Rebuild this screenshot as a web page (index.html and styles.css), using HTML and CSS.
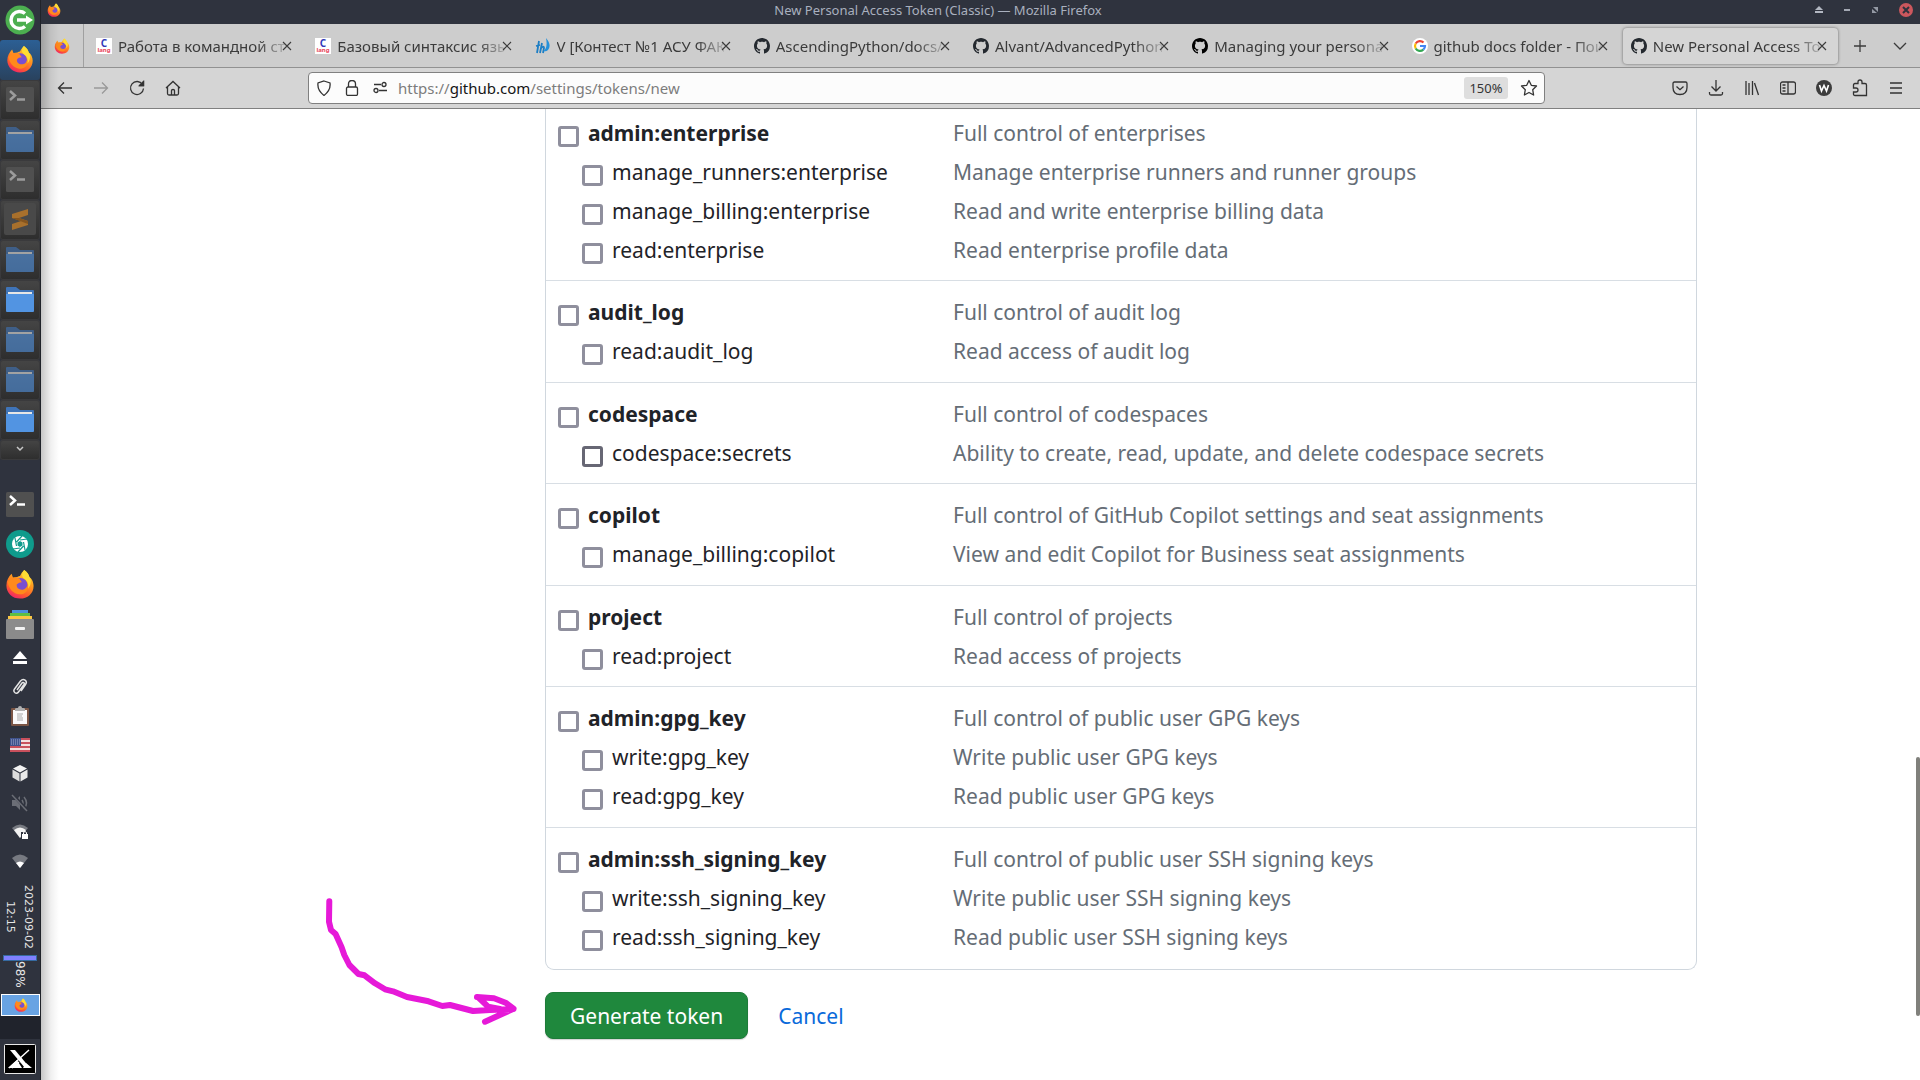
FILE: index.html
```html
<!DOCTYPE html>
<html lang="en">
<head>
<meta charset="utf-8">
<title>New Personal Access Token (Classic)</title>
<link rel="stylesheet" href="styles.css">
</head>
<body>
<svg class="sprite" aria-hidden="true">
  <defs>
    <linearGradient id="ff-body" x1="0.8" y1="0" x2="0.3" y2="1">
      <stop offset="0" stop-color="#ffe03a"/><stop offset="0.4" stop-color="#ff9a1f"/><stop offset="0.75" stop-color="#ff5a2c"/><stop offset="1" stop-color="#f0246a"/>
    </linearGradient>
    <symbol id="firefox" viewBox="0 0 32 32">
      <path fill="url(#ff-body)" d="M20.500 1C24 3.500 25.500 6 26 8.500C28.500 10 30.500 14 30.500 18C30.500 26 24 31.500 16 31.500S1.500 25.500 1.500 17.500C1.500 12 4 8 7 5L8.500 9L13 8.500C14 8 15 7.500 16 7.500C17 5 18.500 3 20.500 1Z"/>
      <circle cx="16.500" cy="17" r="7.500" fill="#7a4fd0"/>
      <path fill="#ff8a1c" d="M3 14C6 9 11 8 15.500 10.500L18 14C15 14 14 15 12.500 16.500C12 20 15 22.500 19 22C22 21.500 23.500 19 24 17C26 23 21 27.500 15.500 27C9 26.500 4 21 3 14Z"/>
      <path fill="#ffdc35" d="M20.500 1C17.500 5 17.500 8 20.500 10.500C24.500 13.500 25.500 17 24.500 21C28 17.500 28.500 11 26 8.500C25.500 6 24 3.500 20.500 1Z"/>
    </symbol>
    <symbol id="folder" viewBox="0 0 28 26">
      <path class="folder-back" d="M0 2Q0 1 1 1H10L14 4H27Q28 4 28 5V24H0Z"/>
      <path class="folder-paper" d="M2 6H26V10H2Z"/>
      <path class="folder-front" d="M0 8H28V25Q28 26 27 26H1Q0 26 0 25Z"/>
    </symbol>
    <symbol id="terminal" viewBox="0 0 28 25">
      <rect width="28" height="25" rx="1.500" fill="#505050"/>
      <path d="M4 4L9 8.500L4 13" fill="none" stroke="currentColor" stroke-width="2.500"/>
      <path d="M11 12.500H19" stroke="currentColor" stroke-width="2.500"/>
    </symbol>
    <symbol id="github" viewBox="0 0 16 16">
      <path fill="currentColor" d="M8 0C3.580 0 0 3.580 0 8c0 3.540 2.290 6.530 5.470 7.590.4.070.55-.17.55-.38 0-.19-.01-.82-.01-1.490-2.010.37-2.530-.49-2.690-.94-.09-.23-.48-.94-.82-1.130-.28-.15-.68-.52-.01-.53.63-.01 1.080.58 1.230.82.72 1.210 1.870.87 2.330.66.07-.52.28-.87.51-1.070-1.780-.2-3.640-.89-3.640-3.950 0-.87.31-1.590.82-2.150-.08-.2-.36-1.020.08-2.120 0 0 .67-.21 2.200.82.64-.18 1.320-.27 2-.27.68 0 1.360.09 2 .27 1.530-1.040 2.200-.82 2.200-.82.44 1.100.16 1.920.08 2.120.51.56.82 1.270.82 2.150 0 3.070-1.870 3.750-3.650 3.950.29.25.54.73.54 1.480 0 1.070-.01 1.930-.01 2.200 0 .21.15.46.55.38A8.010 8.010 0 0 0 16 8c0-4.420-3.580-8-8-8z"/>
    </symbol>
    <symbol id="clang" viewBox="0 0 16 16">
      <rect width="16" height="16" fill="#fff"/>
      <text x="8" y="9" text-anchor="middle" class="clang-c">C</text>
      <text x="8" y="14" text-anchor="middle" class="clang-lang">lang</text>
    </symbol>
    <symbol id="close" viewBox="0 0 10 10"><path d="M1 1L9 9M9 1L1 9" stroke="currentColor" stroke-width="1.100"/></symbol>
  </defs>
</svg>

<aside class="dock" aria-label="Panel">
  <button class="dock-tile" aria-label="Log out"><svg width="30" height="30" viewBox="0 0 30 30"><circle cx="15" cy="15" r="14.500" fill="#4caf50"/><path d="M20 8.500A8.500 8.500 0 1 0 20 21.500" fill="none" stroke="#fff" stroke-width="3.500"/><path d="M12 15H22" stroke="#fff" stroke-width="3.500"/><path d="M21 10.500L28 15L21 19.500Z" fill="#fff"/></svg></button>
  <button class="dock-tile task focused" aria-label="Firefox"><svg width="28" height="28"><use href="#firefox"/></svg></button>
  <button class="dock-tile task minimized" aria-label="Terminal"><svg width="28" height="25"><use href="#terminal"/></svg></button>
  <button class="dock-tile task dim" aria-label="Files"><svg width="28" height="26"><use href="#folder"/></svg></button>
  <button class="dock-tile task minimized" aria-label="Terminal"><svg width="28" height="25"><use href="#terminal"/></svg></button>
  <button class="dock-tile task" aria-label="Sublime Text"><svg width="32" height="32" viewBox="0 0 32 32"><rect width="32" height="32" rx="2" fill="#494949"/><path d="M8 11L24 6V12L15 15L24 18V22L8 27V21L17 18L8 15Z" fill="#a8702c"/><path d="M8 15L15 15L24 18V21Z" fill="#85551f"/></svg></button>
  <button class="dock-tile task dim" aria-label="Files"><svg width="28" height="26"><use href="#folder"/></svg></button>
  <button class="dock-tile task" aria-label="Files"><svg width="28" height="26"><use href="#folder"/></svg></button>
  <button class="dock-tile task dim" aria-label="Files"><svg width="28" height="26"><use href="#folder"/></svg></button>
  <button class="dock-tile task dim" aria-label="Files"><svg width="28" height="26"><use href="#folder"/></svg></button>
  <button class="dock-tile task" aria-label="Files"><svg width="28" height="26"><use href="#folder"/></svg></button>
  <button class="dock-tile task more" aria-label="More windows"><svg width="8" height="6" viewBox="0 0 8 6"><path d="M1 1L4 4L7 1" fill="none" stroke="#c8c8c8" stroke-width="1.500"/></svg></button>

  <div class="launchers">
    <button class="dock-tile" aria-label="Terminal"><svg class="bright" width="28" height="25"><use href="#terminal"/></svg></button>
    <button class="dock-tile" aria-label="Screenshot"><svg width="28" height="28" viewBox="0 0 28 28"><circle cx="14" cy="14" r="14" fill="#0f9b8c"/><circle cx="14" cy="14" r="8" fill="#fff"/><path d="M14 10L21 9M17.500 12L19 20M17.500 16L12 22M14 18L7 19M10.500 16L9 8M10.500 12L16 6" stroke="#0f9b8c" stroke-width="1.200"/><path d="M14 11L16.500 12.500V15.500L14 17L11.500 15.500V12.500Z" fill="#0f9b8c"/></svg></button>
    <button class="dock-tile" aria-label="Firefox"><svg width="30" height="30"><use href="#firefox"/></svg></button>
    <button class="dock-tile" aria-label="File manager"><svg width="28" height="29" viewBox="0 0 28 29"><rect x="6" width="16" height="4" fill="#4a8fdc"/><rect x="4" y="3" width="20" height="4" fill="#5fbf42"/><rect x="2" y="6" width="24" height="4" fill="#fbc743"/><rect y="9" width="28" height="20" rx="1" fill="#8b8b8b"/><rect x="9" y="17" width="10" height="3" rx="1" fill="#f2f2f2"/></svg></button>
  </div>

  <div class="tray">
    <button aria-label="Eject"><svg width="16" height="16" viewBox="0 0 16 16" fill="#fff"><path d="M8 1L15 9H1Z"/><path d="M1 11H15V14H1Z"/></svg></button>
    <button aria-label="Attachments"><svg width="16" height="18" viewBox="0 0 16 18" fill="none" stroke="#e4e4e4" stroke-width="1.500"><path d="M5 12L10 5C11 3.500 13 5 12 6.500L6.500 14C4.500 17 0.500 14 2.500 11L8.500 3C11.500-.5 16 3 13.500 6.500L9 13"/></svg></button>
    <button aria-label="Clipboard"><svg width="18" height="20" viewBox="0 0 18 20"><rect y="2" width="18" height="18" rx="1" fill="#7b5544"/><path d="M2 4H16V18H2Z" fill="#fafafa"/><path d="M4 5V3Q4 2 6 2H7Q7 0 9 0T11 2H12Q14 2 14 3V5Z" fill="#b0b0b0"/><path d="M6 8H12M6 10H11M6 12H12M6 14H12" stroke="#aaa"/></svg></button>
    <button aria-label="Keyboard layout"><svg width="20" height="14" viewBox="0 0 20 14"><path d="M0 0H20V14H0Z" fill="#f3dede"/><path d="M0 1H20M0 5H20M0 9H20M0 13H20" stroke="#c9505c" stroke-width="2"/><path d="M0 0H11V8H0Z" fill="#40538c"/><path d="M1 2H10M1 4H10M1 6H10" stroke="#a2acd0" stroke-dasharray="1 1"/></svg></button>
    <button aria-label="Packages"><svg width="16" height="18" viewBox="0 0 16 18"><path d="M8 0L15 3.500L8 7.500L1 3.500Z" fill="#f2f2f2"/><path d="M.5 4.500L7.500 8.500V16.500L.5 12.500Z" fill="#dcdcdc"/><path d="M15.500 4.500L8.500 8.500V16.500L15.500 12.500Z" fill="#e9e9e9"/></svg></button>
    <button aria-label="Muted"><svg width="18" height="18" viewBox="0 0 18 18"><path d="M1 6H5L9 2V16L5 12H1Z" fill="#6b6e76"/><path d="M11 6Q13 9 11 12M13 3Q18 9 13 15" fill="none" stroke="#6b6e76" stroke-width="1.500"/><path d="M2 1L17 17" stroke="#2f333e" stroke-width="3"/><path d="M1 1L16 17" stroke="#6b6e76" stroke-width="1.500"/></svg></button>
    <button aria-label="Wi-Fi"><svg width="17" height="18" viewBox="0 0 17 18"><path d="M0 5Q8 -2 16 5L8 15Z" fill="#777a81"/><path d="M2 7Q8 2 14 7L8 15Z" fill="#f2f2f2"/><path d="M9 9H17V17H9Z" fill="#2f333e"/><path d="M10 11H16V16H10Z" fill="#fff"/><path d="M11.500 11V9.500Q13 7.500 14.500 9.500V11" fill="none" stroke="#fff"/></svg></button>
    <button aria-label="Network"><svg width="16" height="16" viewBox="0 0 16 16"><path d="M0 5Q8 -2 16 5L8 15Z" fill="#777a81"/><path d="M4 10Q8 7 12 10L8 15Z" fill="#fff"/></svg></button>
  </div>

  <div class="clock"><time>2023-09-02</time><time>12:15</time></div>
  <div class="battery"><span class="battery-bar"></span><span class="battery-text">98%</span></div>
  <button class="pager" aria-label="Workspace"><svg width="14" height="14"><use href="#firefox"/></svg></button>
  <div class="dock-gap"></div>
  <button class="dock-tile" aria-label="X server"><svg width="32" height="30" viewBox="0 0 32 30"><rect x=".5" y=".5" width="31" height="29" rx="1" fill="#000" stroke="#e8e8e8"/><path d="M6 6H11L26 24H21Z" fill="#fff"/><path d="M25 6L5 24M8 24L15 18" stroke="#fff" stroke-width="1.500"/><path d="M4 24L13 16L18 24ZM19 24L22 19L28 24Z" fill="#fff"/></svg></button>
</aside>

<div class="window">
  <header class="titlebar">
    <svg width="14" height="14"><use href="#firefox"/></svg>
    <span class="titlebar-text">New Personal Access Token (Classic) — Mozilla Firefox</span>
    <div class="window-buttons">
      <button aria-label="Roll up"><svg width="8" height="8" viewBox="0 0 8 8" fill="#b3b8c2"><path d="M4 0L8 4H0Z"/><path d="M0 5H8V7H0Z"/></svg></button>
      <button aria-label="Minimize"><svg width="8" height="8" viewBox="0 0 8 8"><path d="M1 3H7V5H1Z" fill="#a4a9b4"/></svg></button>
      <button aria-label="Restore"><svg width="8" height="8" viewBox="0 0 8 8" fill="#9499a4"><path d="M2 1H7V6Z"/><path d="M1 3L6 7H1Z"/></svg></button>
      <button aria-label="Close"><svg width="14" height="14" viewBox="0 0 14 14"><circle cx="7" cy="7" r="7" fill="#cc575d"/><path d="M4 4L10 10M10 4L4 10" stroke="#2f333e" stroke-width="2"/></svg></button>
    </div>
  </header>

  <nav class="tabbar">
    <a class="pinned" href="#" aria-label="Firefox View"><svg width="16" height="16"><use href="#firefox"/></svg></a>
    <div class="tabs">
      <div class="tab"><svg width="16" height="16"><use href="#clang"/></svg><a href="#">Работа в командной стр</a><button aria-label="Close tab"><svg width="10" height="10"><use href="#close"/></svg></button></div>
      <div class="tab"><svg width="16" height="16"><use href="#clang"/></svg><a href="#">Базовый синтаксис язы</a><button aria-label="Close tab"><svg width="10" height="10"><use href="#close"/></svg></button></div>
      <div class="tab"><svg width="16" height="16" viewBox="0 0 16 16"><path d="M4 3L2 15M1 8L5 7M7 5L5 15M5.500 11Q9 7 9 10L8 15" fill="none" stroke="#1d7ec4" stroke-width="1.800"/><path d="M11 0Q17 7 13 12Q11 14 8.500 13Q13 10 11 0Z" fill="#2491db"/></svg><a href="#">V [Контест №1 АСУ ФАКИ</a><button aria-label="Close tab"><svg width="10" height="10"><use href="#close"/></svg></button></div>
      <div class="tab"><svg class="gh" width="16" height="16"><use href="#github"/></svg><a href="#">AscendingPython/docs/g</a><button aria-label="Close tab"><svg width="10" height="10"><use href="#close"/></svg></button></div>
      <div class="tab"><svg class="gh" width="16" height="16"><use href="#github"/></svg><a href="#">Alvant/AdvancedPython:</a><button aria-label="Close tab"><svg width="10" height="10"><use href="#close"/></svg></button></div>
      <div class="tab"><svg class="gh-black" width="16" height="16"><use href="#github"/></svg><a href="#">Managing your personal</a><button aria-label="Close tab"><svg width="10" height="10"><use href="#close"/></svg></button></div>
      <div class="tab"><svg width="16" height="16" viewBox="0 0 16 16"><circle cx="8" cy="8" r="8" fill="#fff"/><g fill="none" stroke-width="2.200"><path d="M11.500 4.500A5 5 0 0 0 3.700 5.500" stroke="#ea4335"/><path d="M3.700 5.500A5 5 0 0 0 3.700 10.500" stroke="#fbbc05"/><path d="M3.700 10.500A5 5 0 0 0 11.300 11.700" stroke="#34a853"/><path d="M11.300 11.700A5 5 0 0 0 13 8H8" stroke="#4285f4"/></g></svg><a href="#">github docs folder - Пои</a><button aria-label="Close tab"><svg width="10" height="10"><use href="#close"/></svg></button></div>
      <div class="tab active"><svg class="gh" width="16" height="16"><use href="#github"/></svg><a href="#">New Personal Access Tok</a><button aria-label="Close tab"><svg width="10" height="10"><use href="#close"/></svg></button></div>
    </div>
    <button class="tabbar-button" aria-label="New tab"><svg width="12" height="12" viewBox="0 0 12 12"><path d="M6 0V12M0 6H12" stroke="currentColor" stroke-width="1.300"/></svg></button>
    <button class="tabbar-button" aria-label="List all tabs"><svg width="14" height="8" viewBox="0 0 14 8"><path d="M1 1L7 7L13 1" fill="none" stroke="currentColor" stroke-width="1.300"/></svg></button>
  </nav>

  <div class="toolbar">
    <div class="nav-buttons">
      <button aria-label="Back"><svg width="16" height="16" viewBox="0 0 16 16"><path d="M15 8H1.500M7 2.500L1.500 8L7 13.500"/></svg></button>
      <button aria-label="Forward" disabled><svg width="16" height="16" viewBox="0 0 16 16"><path d="M1 8H14.500M9 2.500L14.500 8L9 13.500"/></svg></button>
      <button aria-label="Reload"><svg width="16" height="16" viewBox="0 0 16 16"><path d="M13.500 4.500A6.500 6.500 0 1 0 14.500 8.500M14.500 1V5.500H10"/><path d="M14.500 1.500V5.500H10.500Z" fill="currentColor"/></svg></button>
      <button aria-label="Home"><svg width="16" height="16" viewBox="0 0 16 16"><path d="M1 8L8 1.500L15 8M2.500 7V13.500Q2.500 15 4 15H12Q13.500 15 13.500 13.500V7M6.500 15V10.500Q6.500 9.500 8 9.500T9.500 10.500V15"/></svg></button>
    </div>
    <div class="urlbar">
      <svg width="16" height="16" viewBox="0 0 16 16"><path d="M8 1L14 3Q15 10 8 15.500Q1 10 2 3Z"/></svg>
      <svg width="16" height="16" viewBox="0 0 16 16"><rect x="2.500" y="7" width="11" height="8.500" rx="1.500"/><path d="M4.500 7V4Q4.500 .5 8 .5T11.500 4V7"/></svg>
      <svg width="16" height="16" viewBox="0 0 16 16"><path d="M2 4.500H9M7 10.500H15"/><circle cx="12" cy="4.500" r="2"/><circle cx="4" cy="10.500" r="2"/></svg>
      <span class="url" role="textbox" aria-label="Address">https://<b>github.com</b>/settings/tokens/new</span>
      <button class="zoom-level">150%</button>
      <button aria-label="Bookmark"><svg width="18" height="18" viewBox="0 0 18 18"><path d="M9 1.500L11.300 6.300L16.500 7L12.700 10.700L13.600 16L9 13.500L4.400 16L5.300 10.700L1.500 7L6.700 6.300Z" stroke-linejoin="round"/></svg></button>
    </div>
    <div class="tool-buttons">
      <button aria-label="Save to Pocket"><svg width="16" height="16" viewBox="0 0 16 16"><path d="M2.500 2H13.500Q15 2 15 3.500V7.500Q15 14.500 8 14.500T1 7.500V3.500Q1 2 2.500 2ZM4.500 6.500L8 9.700L11.500 6.500"/></svg></button>
      <button aria-label="Downloads"><svg width="16" height="16" viewBox="0 0 16 16"><path d="M8 0V11M3.500 6.500L8 11L12.500 6.500M1.500 12V13.500Q1.500 15 3 15H13Q14.500 15 14.500 13.500V12"/></svg></button>
      <button aria-label="Library"><svg width="16" height="16" viewBox="0 0 16 16"><path d="M2 1V15M5 3V15M8.500 1V15M10.500 3L14.500 15"/></svg></button>
      <button aria-label="Sidebars"><svg width="16" height="16" viewBox="0 0 16 16"><rect x=".5" y="2" width="15" height="12" rx="2"/><path d="M8 2V14M2.500 5H5.500M2.500 8H5.500M2.500 11H5.500"/></svg></button>
      <button aria-label="Account"><svg width="16" height="16" viewBox="0 0 16 16"><circle cx="8" cy="8" r="8" fill="#3d3d3d" stroke="none"/><path d="M3.500 5L5.500 11L8 5.500L10.500 11L12.500 5" stroke="#fff" stroke-width="1.600"/></svg></button>
      <button aria-label="Extensions"><svg width="16" height="18" viewBox="0 0 16 18"><path d="M1.500 9V6Q1.500 4.500 3 4.500H6V3Q6 1 8 1T10 3V4.500H13Q14.500 4.500 14.500 6V16.500H3Q1.500 16.500 1.500 15V13H4Q6 13 6 11T4 9Z"/></svg></button>
      <button aria-label="Menu"><svg width="14" height="14" viewBox="0 0 14 14"><path d="M1 2H13M1 7H13M1 12H13"/></svg></button>
    </div>
  </div>

  <main class="page">
    <form class="token-form">
      <ul class="scopes">
        <li class="group">
          <div class="row parent"><label><input type="checkbox">admin:enterprise</label><span>Full control of enterprises</span></div>
          <div class="row"><label><input type="checkbox">manage_runners:enterprise</label><span>Manage enterprise runners and runner groups</span></div>
          <div class="row"><label><input type="checkbox">manage_billing:enterprise</label><span>Read and write enterprise billing data</span></div>
          <div class="row"><label><input type="checkbox">read:enterprise</label><span>Read enterprise profile data</span></div>
        </li>
        <li class="group">
          <div class="row parent"><label><input type="checkbox">audit_log</label><span>Full control of audit log</span></div>
          <div class="row"><label><input type="checkbox">read:audit_log</label><span>Read access of audit log</span></div>
        </li>
        <li class="group">
          <div class="row parent"><label><input type="checkbox">codespace</label><span>Full control of codespaces</span></div>
          <div class="row"><label><input class="hovered" type="checkbox">codespace:secrets</label><span>Ability to create, read, update, and delete codespace secrets</span></div>
        </li>
        <li class="group">
          <div class="row parent"><label><input type="checkbox">copilot</label><span>Full control of GitHub Copilot settings and seat assignments</span></div>
          <div class="row"><label><input type="checkbox">manage_billing:copilot</label><span>View and edit Copilot for Business seat assignments</span></div>
        </li>
        <li class="group">
          <div class="row parent"><label><input type="checkbox">project</label><span>Full control of projects</span></div>
          <div class="row"><label><input type="checkbox">read:project</label><span>Read access of projects</span></div>
        </li>
        <li class="group">
          <div class="row parent"><label><input type="checkbox">admin:gpg_key</label><span>Full control of public user GPG keys</span></div>
          <div class="row"><label><input type="checkbox">write:gpg_key</label><span>Write public user GPG keys</span></div>
          <div class="row"><label><input type="checkbox">read:gpg_key</label><span>Read public user GPG keys</span></div>
        </li>
        <li class="group">
          <div class="row parent"><label><input type="checkbox">admin:ssh_signing_key</label><span>Full control of public user SSH signing keys</span></div>
          <div class="row"><label><input type="checkbox">write:ssh_signing_key</label><span>Write public user SSH signing keys</span></div>
          <div class="row"><label><input type="checkbox">read:ssh_signing_key</label><span>Read public user SSH signing keys</span></div>
        </li>
      </ul>
      <div class="actions">
        <button class="generate" type="button">Generate token</button>
        <a class="cancel" href="#">Cancel</a>
        <svg class="arrow" width="200" height="132" viewBox="320 896 200 132"><path d="M329.300 901.300L329 921.700L331 930L335.600 934L341.500 947L344.300 955L349.400 965L358.500 974L364.500 975.300L375 983.300L385 989.300L393 991.300L407 997L428.500 1001.300L442.300 1006L450 1005L473 1011L490 1010L513.500 1009M477 997L494 998.300L505.600 1002.700L513.500 1008.700L503.600 1013.300L485 1021.700M479 998L488 1006.700L500 1009"/></svg>
      </div>
    </form>
    <div class="scroll-thumb"></div>
  </main>
  <div class="edge-shadow"></div>
</div>
</body>
</html>
```
FILE: styles.css
```css
* { box-sizing: border-box; }

body {
  margin: 0;
  display: flex;
  height: 100vh;
  overflow: hidden;
  background: #fff;
  font-family: "Noto Sans", sans-serif;
}

button {
  display: flex;
  align-items: center;
  justify-content: center;
  padding: 0;
  border: 0;
  background: none;
  color: inherit;
  font: inherit;
}

a { text-decoration: none; color: inherit; }
svg { display: block; flex: none; }
.sprite { position: absolute; width: 0; height: 0; }

/* Desktop panel */
.dock {
  display: flex;
  flex-direction: column;
  flex: none;
  width: 41px;
  border-right: 1px solid #20232a;
  background: #2f333e;
}
.dock-tile { flex: none; width: 40px; height: 40px; }
.task {
  padding-bottom: 2px;
  border-radius: 3px;
  background: linear-gradient(#454545, #2d2d2d);
  box-shadow: inset 0 0 0 1px #3a3a3c;
}
.task.focused { background: linear-gradient(#2c5f94, #29425e); box-shadow: none; }
.task.more { height: 20px; }
.folder-back { fill: #3f74b8; }
.folder-paper { fill: #e6e6e6; }
.folder-front { fill: #5294e2; }
.dim svg { opacity: .6; }
.minimized { color: #9c9c9c; }
.bright { color: #fff; }
.launchers { margin-top: 24px; }
.tray button { width: 40px; height: 29px; padding-bottom: 1px; }
.clock {
  display: flex;
  flex-direction: column;
  align-items: center;
  justify-content: center;
  height: 79px;
  padding: 2px 2px 0 0;
  gap: 5px;
  writing-mode: vertical-rl;
  color: #e6e6e6;
  font: 11px/13px "DejaVu Sans", sans-serif;
}
.battery {
  display: flex;
  flex-direction: column;
  align-items: center;
  height: 39px;
  color: #e6e6e6;
  font: 12px/14px "DejaVu Sans", sans-serif;
}
.battery-bar { width: 34px; height: 6px; background: #8080ff; border: 1px solid #356aa0; }
.battery-text { writing-mode: vertical-rl; }
.pager { flex: none; width: 39px; height: 22px; margin-left: 1px; border: 1px solid #fff; background: #68a3e3; }
.dock-gap { flex: 1; max-height: 23px; background: #20232c; }

/* Browser window */
.window {
  position: relative;
  display: flex;
  flex: 1;
  flex-direction: column;
  min-width: 0;
}
.edge-shadow {
  position: absolute;
  inset: 24px auto 0 0;
  width: 18px;
  background: linear-gradient(90deg, rgba(0, 0, 0, .22), rgba(0, 0, 0, .06) 55%, transparent);
  pointer-events: none;
}
.titlebar {
  display: flex;
  align-items: center;
  flex: none;
  height: 24px;
  padding: 0 7px 4px 6px;
  background: #2f333e;
  color: #a9b0bf;
  font-size: 13px;
  line-height: 20px;
}
.titlebar-text { flex: 1; text-align: center; }
.window-buttons { display: flex; justify-content: flex-end; gap: 20px; }
.tabbar {
  display: flex;
  flex: none;
  align-items: center;
  height: 44px;
  border-bottom: 1px solid #919191;
  background: #cdcdcd;
  color: #3b3b3b;
}
.pinned {
  display: flex;
  align-items: center;
  justify-content: center;
  width: 43px;
  height: 43px;
  border-right: 1px solid #a0a0a0;
}
.tabs { display: flex; flex: 1; gap: 4px; min-width: 0; padding: 0 2px 0 4px; }
.tab {
  display: flex;
  flex: 1 1 0;
  align-items: center;
  min-width: 0;
  height: 36px;
  padding: 0 11px 0 8px;
  border-radius: 4px;
  font-size: 15px;
}
.tab a {
  flex: 1;
  min-width: 0;
  margin: 0 -3px 0 6px;
  overflow: hidden;
  white-space: nowrap;
  mask-image: linear-gradient(to left, rgba(0, 0, 0, .2), #000 28px);
}
.tab.active { background: #d5d5d5; box-shadow: 0 0 3px rgba(0, 0, 0, .5); }
.gh { color: #24292f; }
.gh-black { color: #000; }
.clang-c { fill: #3338b8; font: bold 10px "Noto Sans", sans-serif; }
.clang-lang { fill: #e8455a; font: bold 6px "Noto Sans", sans-serif; }
.tabbar-button { width: 40px; height: 40px; }

.toolbar {
  display: flex;
  flex: none;
  align-items: center;
  height: 41px;
  border-bottom: 1px solid #808080;
  background: #d5d5d5;
  color: #333;
}
.toolbar svg { fill: none; stroke: currentColor; stroke-width: 1.3; }
.nav-buttons { display: flex; padding-left: 6px; }
.nav-buttons button, .tool-buttons button { width: 36px; height: 36px; }
.nav-buttons button:disabled { color: #999; }
.urlbar {
  display: flex;
  flex: 1;
  align-items: center;
  height: 32px;
  margin: 0 117px;
  padding: 0 6px 0 7px;
  gap: 12px;
  border: 1px solid #808080;
  border-radius: 4px;
  background: #fcfcfc;
  font-size: 15px;
}
.url { flex: 1; margin-left: -2px; color: #7c7c7c; }
.url b { color: #151515; font-weight: 400; }
.zoom-level { width: 44px; height: 22px; border-radius: 3px; background: #dedede; font-size: 13px; }
.tool-buttons { display: flex; padding-right: 6px; }

/* Token settings page */
.page {
  position: relative;
  flex: 1;
  min-height: 0;
  overflow: hidden;
  padding: 0 223px 0 504px;
  background: #fff;
  color: #1f2328;
  font-size: 21px;
  line-height: 32px;
}
.scopes {
  margin: 0;
  padding: 0;
  list-style: none;
  border: 1px solid #d0d7de;
  border-top: 0;
  border-radius: 0 0 9px 9px;
}
.group { padding: 11px 0 12px 12px; }
.group:nth-child(odd) { padding-bottom: 11px; }
.group:first-child { padding-top: 4px; }
.group:last-child { padding-bottom: 13px; }
.group + .group { border-top: 1px solid #d8dee4; }
.row { display: grid; grid-template-columns: 395px 1fr; align-items: center; height: 39px; color: #656d76; }
.row label { display: flex; align-items: center; gap: 9px; padding-left: 24px; color: #1f2328; }
.row.parent label { padding-left: 0; font-weight: 700; }
.row input {
  appearance: none;
  width: 21px;
  height: 21px;
  margin: 8px 0 0;
  border: 3px solid #8f8f9d;
  border-radius: 3px;
  background: #fff;
}
.row input.hovered { border-color: #676774; }
.actions { position: relative; display: flex; align-items: center; gap: 30px; margin-top: 22px; }
.generate {
  height: 47px;
  padding: 0 24px;
  border: 1px solid #1e7b39;
  border-radius: 8px;
  background: #1f883d;
  box-shadow: 0 1px 1px rgba(31, 35, 40, .2);
  color: #fff;
}
.cancel { color: #0969da; }
.arrow {
  position: absolute;
  left: -225px;
  top: -96px;
  fill: none;
  stroke: #e619d8;
  stroke-width: 6;
  stroke-linecap: round;
  stroke-linejoin: round;
}
.scroll-thumb {
  position: absolute;
  right: 0;
  bottom: 64px;
  width: 4px;
  height: 259px;
  border-radius: 2px;
  background: #80807b;
}
```
